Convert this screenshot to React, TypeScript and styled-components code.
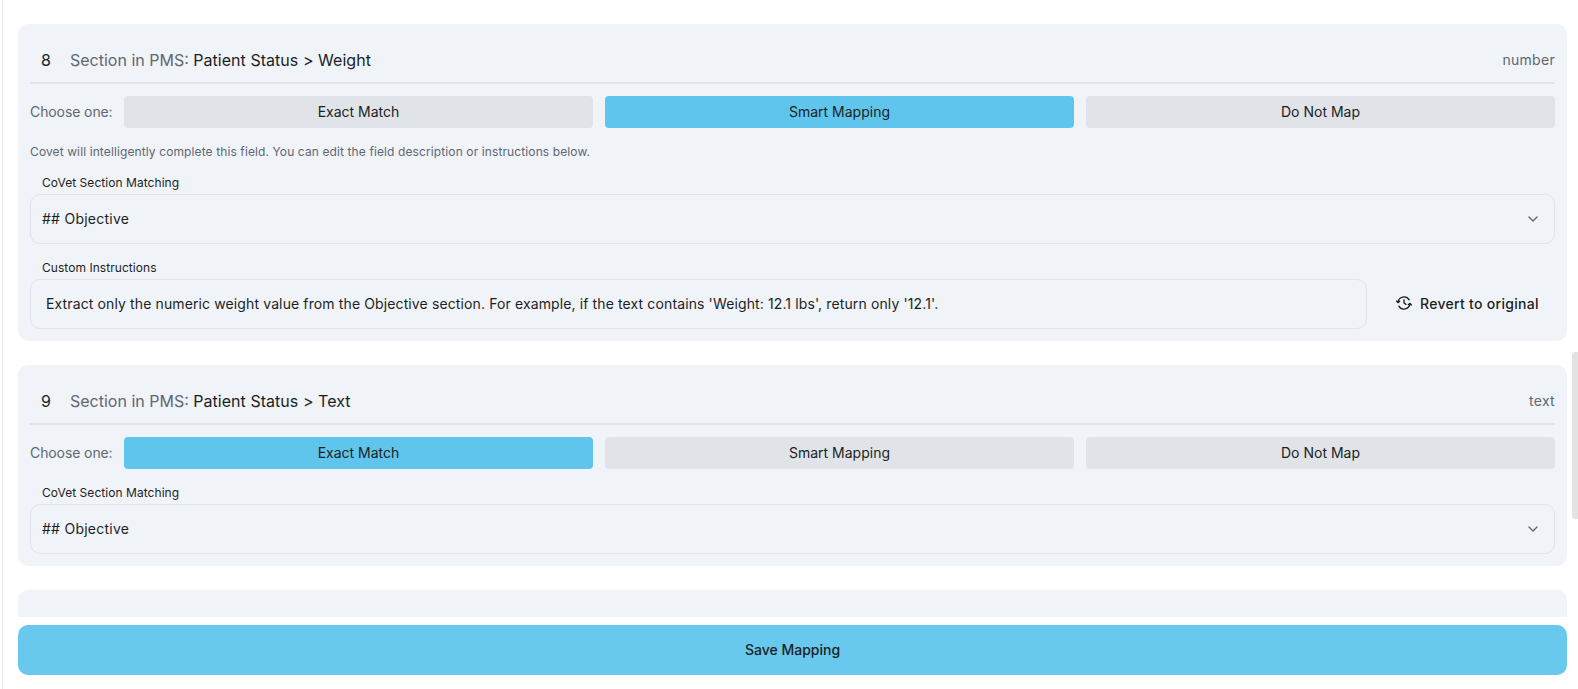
import { createGlobalStyle, styled } from 'styled-components';
import { ChevronDown } from 'lucide-react';

const GlobalStyle = createGlobalStyle`
  html, body {
    margin: 0;
    height: 100%;
    overflow: hidden;
    background: #fff;
    font-family: Inter, "Noto Sans", sans-serif;
    color: #1b1f24;
  }
`;

const Page = styled.div`
  position: relative;
  display: flex;
  flex-direction: column;
  height: 689px;
  margin-left: 2px;
  border-left: 1px solid #e4e8f0;
  box-sizing: border-box;
`;

const Scroller = styled.div`
  flex: 1;
  min-height: 0;
  overflow: hidden;
  display: flex;
  flex-direction: column;
  gap: 24px;
  padding: 24px 11px 0 15px;
`;

const Thumb = styled.div`
  position: absolute;
  top: 352px;
  right: 0;
  width: 6px;
  height: 167px;
  border-radius: 3px 0 0 3px;
  background: #e3e3e3;
`;

const Card = styled.section`
  flex: none;
  display: flex;
  flex-direction: column;
  box-sizing: border-box;
  padding: 0 12px 12px;
  border-radius: 10px;
  background: #f0f3f8;
`;

const EmptyCard = styled(Card)`
  height: 120px;
`;

const CardHeader = styled.header`
  display: flex;
  align-items: center;
  height: 60px;
  padding-top: 14px;
  box-sizing: border-box;
  border-bottom: 2px solid #e0e3e8;
  font-size: 16px;
`;

const Index = styled.span`
  width: 40px;
  padding-left: 11px;
  box-sizing: border-box;
`;

const Muted = styled.span`
  color: #5f6772;
  white-space: pre;
`;

const SectionName = styled.span`
  letter-spacing: 0.04px;
`;

const Type = styled.span`
  margin-left: auto;
  margin-bottom: 2px;
  font-size: 14px;
  letter-spacing: 0.3px;
  color: #5f6772;
`;

const ChoiceRow = styled.div`
  display: flex;
  align-items: center;
  gap: 12px;
  margin-top: 12px;
`;

const ChoiceLabel = styled.span`
  width: 82px;
  margin-bottom: 2px;
  font-size: 14px;
  letter-spacing: -0.1px;
  color: #5f6772;
  white-space: nowrap;
`;

const Choice = styled.button<{ $active?: boolean }>`
  flex: 1;
  height: 32px;
  border: 0;
  border-radius: 4px;
  padding: 0 0 2px;
  font: inherit;
  font-size: 14px;
  color: #1b1f24;
  background: ${(p) => (p.$active ? '#60c5ec' : '#e0e3e8')};
`;

const Help = styled.p`
  margin: 16px 0 -1px;
  font-size: 12px;
  line-height: 16px;
  letter-spacing: 0.11px;
  color: #5f6772;
`;

const FieldLabel = styled.label`
  display: block;
  margin: 16px 0 3px 12px;
  font-size: 12px;
  line-height: 16px;
  letter-spacing: 0.05px;
`;

const Select = styled.div`
  display: flex;
  align-items: center;
  justify-content: space-between;
  height: 50px;
  padding: 0 13px 0 11px;
  box-sizing: border-box;
  border: 1px solid #e0e3e8;
  border-radius: 10px;
  font-size: 14px;
  color: #5f6772;
`;

const SelectValue = styled.span`
  margin-bottom: 2px;
  letter-spacing: 0.25px;
  color: #1b1f24;
`;

const InstructionRow = styled.div`
  display: flex;
  align-items: center;
`;

const Instructions = styled.div`
  flex: 1;
  display: flex;
  align-items: center;
  height: 50px;
  padding: 0 15px 2px;
  box-sizing: border-box;
  border: 1px solid #e0e3e8;
  border-radius: 10px;
  font-size: 14px;
  letter-spacing: 0.12px;
`;

const RevertButton = styled.button`
  display: flex;
  align-items: center;
  gap: 8px;
  width: 188px;
  padding: 0 16px 2px 29px;
  box-sizing: border-box;
  border: 0;
  background: none;
  font: inherit;
  font-size: 14px;
  font-weight: 500;
  letter-spacing: 0.3px;
  color: #1b1f24;
  white-space: nowrap;
`;

const Footer = styled.footer`
  flex: none;
  padding: 8px 11px 14px 15px;
`;

const SaveButton = styled.button`
  display: block;
  width: 100%;
  height: 50px;
  padding: 0 0 2px;
  border: 0;
  border-radius: 10px;
  background: #68c8ee;
  font: inherit;
  font-size: 14px;
  font-weight: 500;
  color: #1b1f24;
`;

function RevertIcon() {
  return (
    <svg width="16" height="16" viewBox="0 0 24 24" fill="none" stroke="currentColor" strokeWidth="2" strokeLinecap="round" strokeLinejoin="round">
      <path d="M3.1 11a9 9 0 0 1 16.6-3.8" />
      <path d="M20.9 13a9 9 0 0 1-16.6 3.8" />
      <path d="M1 9l2 2.5L5.5 9.5" />
      <path d="M23 15l-2-2.5-2.5 2" />
      <path d="M12 7v5l3 2" />
    </svg>
  );
}

const CHOICES = ['Exact Match', 'Smart Mapping', 'Do Not Map'];

function CardTop({ index, section, type, active }: { index: number; section: string; type: string; active: string }) {
  return (
    <>
      <CardHeader>
        <Index>{index}</Index>
        <Muted>Section in PMS: </Muted>
        <SectionName>{section}</SectionName>
        <Type>{type}</Type>
      </CardHeader>
      <ChoiceRow>
        <ChoiceLabel>Choose one:</ChoiceLabel>
        {CHOICES.map((c) => (
          <Choice key={c} $active={c === active}>{c}</Choice>
        ))}
      </ChoiceRow>
    </>
  );
}

function SectionSelect() {
  return (
    <>
      <FieldLabel>CoVet Section Matching</FieldLabel>
      <Select>
        <SelectValue>## Objective</SelectValue>
        <ChevronDown size={16} />
      </Select>
    </>
  );
}

export default function App() {
  return (
    <>
      <GlobalStyle />
      <Page>
        <Scroller>
          <Card>
            <CardTop index={8} section="Patient Status > Weight" type="number" active="Smart Mapping" />
            <Help>Covet will intelligently complete this field. You can edit the field description or instructions below.</Help>
            <SectionSelect />
            <FieldLabel>Custom Instructions</FieldLabel>
            <InstructionRow>
              <Instructions>
                Extract only the numeric weight value from the Objective section. For example, if the text contains 'Weight: 12.1 lbs', return only '12.1'.
              </Instructions>
              <RevertButton>
                <RevertIcon />
                Revert to original
              </RevertButton>
            </InstructionRow>
          </Card>
          <Card>
            <CardTop index={9} section="Patient Status > Text" type="text" active="Exact Match" />
            <SectionSelect />
          </Card>
          <EmptyCard />
        </Scroller>
        <Footer>
          <SaveButton>Save Mapping</SaveButton>
        </Footer>
        <Thumb />
      </Page>
    </>
  );
}
